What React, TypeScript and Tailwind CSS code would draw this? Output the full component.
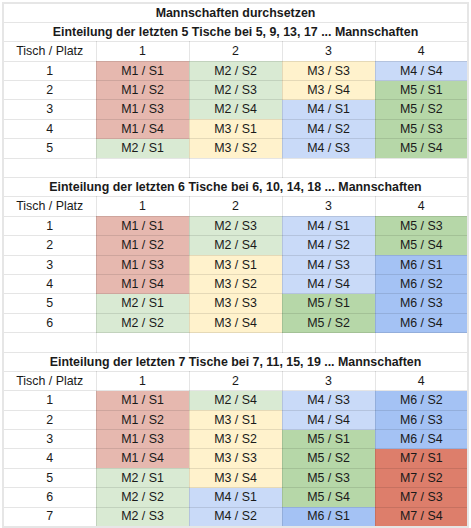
const colors: Record<string, string> = {
  M1: "bg-[#e6b8af]",
  M2: "bg-[#d9ead3]",
  M3: "bg-[#fff2cc]",
  M4: "bg-[#c9daf8]",
  M5: "bg-[#b6d7a8]",
  M6: "bg-[#a4c2f4]",
  M7: "bg-[#dd7e6b]",
};

type Section = { title: string; rows: string[][]; blank: boolean };

const sections: Section[] = [
  {
    title: "Einteilung der letzten 5 Tische bei 5, 9, 13, 17 ... Mannschaften",
    rows: [
      ["M1 / S1", "M2 / S2", "M3 / S3", "M4 / S4"],
      ["M1 / S2", "M2 / S3", "M3 / S4", "M5 / S1"],
      ["M1 / S3", "M2 / S4", "M4 / S1", "M5 / S2"],
      ["M1 / S4", "M3 / S1", "M4 / S2", "M5 / S3"],
      ["M2 / S1", "M3 / S2", "M4 / S3", "M5 / S4"],
    ],
    blank: true,
  },
  {
    title: "Einteilung der letzten 6 Tische bei 6, 10, 14, 18 ... Mannschaften",
    rows: [
      ["M1 / S1", "M2 / S3", "M4 / S1", "M5 / S3"],
      ["M1 / S2", "M2 / S4", "M4 / S2", "M5 / S4"],
      ["M1 / S3", "M3 / S1", "M4 / S3", "M6 / S1"],
      ["M1 / S4", "M3 / S2", "M4 / S4", "M6 / S2"],
      ["M2 / S1", "M3 / S3", "M5 / S1", "M6 / S3"],
      ["M2 / S2", "M3 / S4", "M5 / S2", "M6 / S4"],
    ],
    blank: true,
  },
  {
    title: "Einteilung der letzten 7 Tische bei 7, 11, 15, 19 ... Mannschaften",
    rows: [
      ["M1 / S1", "M2 / S4", "M4 / S3", "M6 / S2"],
      ["M1 / S2", "M3 / S1", "M4 / S4", "M6 / S3"],
      ["M1 / S3", "M3 / S2", "M5 / S1", "M6 / S4"],
      ["M1 / S4", "M3 / S3", "M5 / S2", "M7 / S1"],
      ["M2 / S1", "M3 / S4", "M5 / S3", "M7 / S2"],
      ["M2 / S2", "M4 / S1", "M5 / S4", "M7 / S3"],
      ["M2 / S3", "M4 / S2", "M6 / S1", "M7 / S4"],
    ],
    blank: false,
  },
];

const cell = "border border-black/10 h-[19.4px] p-0 text-center leading-none";

export default function App() {
  return (
    <div className="bg-white pl-[2px] pt-[2px] h-[528px] overflow-hidden">
      <table
        className="w-[467px] table-fixed border-collapse border-2 border-[#e6e6e6] text-[12.4px] text-[#1a1a1a]"
        style={{ fontFamily: '"Liberation Sans", Arial, sans-serif' }}
      >
        <tbody>
          <tr>
            <td colSpan={5} className={`${cell} font-bold`}>
              Mannschaften durchsetzen
            </td>
          </tr>
          {sections.map((s) => (
            <>
              <tr key={s.title}>
                <td colSpan={5} className={`${cell} font-bold`}>
                  {s.title}
                </td>
              </tr>
              <tr>
                <td className={cell}>Tisch / Platz</td>
                {[1, 2, 3, 4].map((n) => (
                  <td key={n} className={cell}>
                    {n}
                  </td>
                ))}
              </tr>
              {s.rows.map((row, i) => (
                <tr key={i}>
                  <td className={cell}>{i + 1}</td>
                  {row.map((v, j) => (
                    <td key={j} className={`${cell} ${colors[v.slice(0, 2)]}`}>
                      {v}
                    </td>
                  ))}
                </tr>
              ))}
              {s.blank && (
                <tr>
                  {[0, 1, 2, 3, 4].map((n) => (
                    <td key={n} className={cell}></td>
                  ))}
                </tr>
              )}
            </>
          ))}
        </tbody>
      </table>
    </div>
  );
}
